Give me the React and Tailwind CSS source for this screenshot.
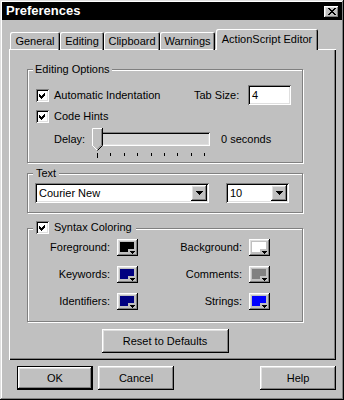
import React from 'react';

const bevel = 'shadow-[inset_-1px_-1px_#000,inset_1px_1px_#fff,inset_-2px_-2px_#808080,inset_2px_2px_#dfdfdf]';
const sunken = 'shadow-[inset_1px_1px_#808080,inset_-1px_-1px_#fff,inset_2px_2px_#000,inset_-2px_-2px_#dfdfdf]';
const etched = 'border border-[#808080] shadow-[inset_1px_1px_#fff,1px_1px_#fff]';

function Check() {
	return (
		<span className={`relative inline-block w-[13px] h-[13px] bg-white shrink-0 ${sunken}`}>
			<svg className="absolute left-[3px] top-[3px]" width="7" height="7" viewBox="0 0 7 7" shapeRendering="crispEdges">
				<polygon points="0,2 2,4 6,0 6,3 2,7 0,5" fill="#000" />
			</svg>
		</span>
	);
}

function Arrow() {
	return (
		<svg width="7" height="4" viewBox="0 0 7 4" shapeRendering="crispEdges">
			<polygon points="0,0 7,0 3.5,4" fill="#000" />
		</svg>
	);
}

function Select({ value, width }) {
	return (
		<div className={`flex items-center h-[20px] bg-white p-[2px] ${sunken} ${width}`}>
			<span className="flex-1 pl-[2px] leading-[16px]">{value}</span>
			<span className={`flex items-center justify-center w-[16px] h-[16px] bg-[#c0c0c0] ${bevel}`}>
				<Arrow />
			</span>
		</div>
	);
}

function Swatch({ color }) {
	return (
		<span className={`relative block w-[21px] h-[17px] bg-[#c0c0c0] ${bevel}`}>
			<span className={`absolute left-[3px] top-[3px] w-[14px] h-[10px] ${color}`} />
			<span className="absolute right-[2px] bottom-[2px] w-[8px] h-[5px] bg-[#c0c0c0] flex items-end justify-end pr-[1px]">
				<svg width="5" height="3" viewBox="0 0 5 3" shapeRendering="crispEdges">
					<polygon points="0,0 5,0 2.5,3" fill="#000" />
				</svg>
			</span>
		</span>
	);
}

function Slider() {
	return (
		<div className="relative w-[118px] h-[30px]">
			<div className={`absolute left-0 top-[4px] w-[118px] h-[14px] bg-[#d4d4d4] ${sunken}`} />
			<svg className="absolute left-0 top-0" width="11" height="24" viewBox="0 0 11 24">
				<polygon points="0.5,0.5 10.5,0.5 10.5,17.5 5.5,22.5 0.5,17.5" fill="#c0c0c0" />
				<path d="M0.5 18 V0.5 H10" stroke="#fff" fill="none" />
				<path d="M0.5 17.5 L5 22" stroke="#fff" fill="none" />
				<path d="M10.5 0 V17.5 L5.5 22.5" stroke="#000" fill="none" />
				<path d="M9.5 1 V17 L5.5 21" stroke="#808080" fill="none" />
			</svg>
			<div className="absolute left-[5px] top-[25px] w-[108px] flex justify-between items-start">
				<span className="w-px h-[5px] bg-black" />
				<span className="w-px h-[3px] bg-black" />
				<span className="w-px h-[3px] bg-black" />
				<span className="w-px h-[3px] bg-black" />
				<span className="w-px h-[3px] bg-black" />
				<span className="w-px h-[3px] bg-black" />
				<span className="w-px h-[3px] bg-black" />
				<span className="w-px h-[3px] bg-black" />
				<span className="w-px h-[3px] bg-black" />
			</div>
		</div>
	);
}

function Button({ children, width, isDefault }) {
	return (
		<button
			className={`h-[24px] ${width} bg-[#c0c0c0] leading-[13px] ${
				isDefault
					? 'border border-black shadow-[inset_-1px_-1px_#000,inset_1px_1px_#fff,inset_-2px_-2px_#808080,inset_2px_2px_#dfdfdf]'
					: bevel
			}`}
		>
			{children}
		</button>
	);
}

const colors = [
	['Foreground:', 'bg-black', 'Background:', 'bg-white'],
	['Keywords:', 'bg-[#000080]', 'Comments:', 'bg-[#808080]'],
	['Identifiers:', 'bg-[#000080]', 'Strings:', 'bg-[#0000ff]'],
];

const tabs = [
	['General', 'w-[50px]'],
	['Editing', 'w-[44px]'],
	['Clipboard', 'w-[56px]'],
	['Warnings', 'w-[55px]'],
];

export default function App() {
	return (
		<div className="w-[344px] h-[400px] bg-[#c0c0c0] p-[2px] flex flex-col font-['Liberation_Sans',Arial,sans-serif] text-[11px] leading-[13px] text-black shadow-[inset_-1px_-1px_#000,inset_1px_1px_#dfdfdf,inset_-2px_-2px_#808080,inset_2px_2px_#fff]">
			{/* title bar */}
			<div className="h-[18px] bg-black flex items-center justify-between pl-[4px] pr-[3px]">
				<span className="text-[13px] font-bold text-white leading-[16px]">Preferences</span>
				<span className={`flex items-center justify-center w-[15px] h-[12px] mt-[1px] bg-[#c0c0c0] ${bevel}`}>
					<svg width="8" height="7" viewBox="0 0 8 7" shapeRendering="crispEdges">
						<path d="M0 0h2v1h-2zM6 0h2v1h-2zM1 1h2v1h-2zM5 1h2v1h-2zM2 2h4v1h-4zM3 3h2v1h-2zM2 4h4v1h-4zM1 5h2v1h-2zM5 5h2v1h-2zM0 6h2v1h-2zM6 6h2v1h-2z" fill="#000" />
					</svg>
				</span>
			</div>

			{/* tabs */}
			<div className="mt-[9px] ml-[8px] flex items-end h-[21px] relative z-10">
				{tabs.map(([label, w]) => (
					<div
						key={label}
						className={`${w} h-[18px] pt-[3px] text-center rounded-t-[2px] shadow-[inset_1px_1px_#fff,inset_-1px_0_#000,inset_-2px_0_#808080]`}
					>
						{label}
					</div>
				))}
				<div className="w-[102px] h-[21px] ml-[1px] pt-[4px] text-center bg-[#c0c0c0] rounded-t-[2px] shadow-[inset_1px_1px_#fff,inset_-1px_0_#000,inset_-2px_0_#808080]">
					ActionScript Editor
				</div>
			</div>

			{/* panel */}
			<div className="mt-[-1px] ml-[7px] w-[327px] h-[311px] pl-[17px] pt-[19px] border-t border-l border-white shadow-[inset_-1px_-1px_#000,inset_-2px_-2px_#808080] flex flex-col">
				{/* Editing Options */}
				<div className={`relative w-[276px] h-[94px] pl-[8px] pt-[15px] ${etched}`}>
					<span className="absolute left-[5px] top-[-7px] px-[2px] bg-[#c0c0c0]">Editing Options</span>
					<div className="flex items-center h-[20px]">
						<Check />
						<span className="ml-[5px] w-[140px]">Automatic Indentation</span>
						<span className="w-[54px]">Tab Size:</span>
						<div className={`w-[43px] h-[20px] bg-white pl-[4px] leading-[20px] ${sunken}`}>4</div>
					</div>
					<div className="flex items-center h-[20px] mt-px">
						<Check />
						<span className="ml-[5px]">Code Hints</span>
					</div>
					<div className="flex items-start mt-[2px] pl-[18px]">
						<span className="w-[38px] mt-[5px]">Delay:</span>
						<Slider />
						<span className="ml-[11px] mt-[5px]">0 seconds</span>
					</div>
				</div>

				{/* Text */}
				<div className={`relative w-[276px] h-[40px] mt-[10px] pl-[7px] pt-[9px] flex ${etched}`}>
					<span className="absolute left-[5px] top-[-7px] px-[3px] bg-[#c0c0c0]">Text</span>
					<Select value="Courier New" width="w-[174px]" />
					<div className="ml-[17px]">
						<Select value="10" width="w-[63px]" />
					</div>
				</div>

				{/* Syntax Coloring */}
				<div className={`relative w-[276px] h-[94px] mt-[15px] pt-[10px] ${etched}`}>
					<span className="absolute left-[5px] top-[-8px] px-[3px] bg-[#c0c0c0] flex items-center">
						<Check />
						<span className="ml-[5px] pr-[1px]">Syntax Coloring</span>
					</span>
					<div className="grid grid-cols-[82px_21px_97px_21px] gap-x-[7px] gap-y-[10px] items-center">
						{colors.map(([l1, c1, l2, c2]) => (
							<React.Fragment key={l1}>
								<span className="text-right">{l1}</span>
								<Swatch color={c1} />
								<span className="text-right">{l2}</span>
								<Swatch color={c2} />
							</React.Fragment>
						))}
					</div>
				</div>

				<div className="w-[276px] mt-[7px] flex justify-center">
					<Button width="w-[127px]">Reset to Defaults</Button>
				</div>
			</div>

			{/* bottom buttons */}
			<div className="mt-[6px] pl-[15px] flex">
				<Button width="w-[76px]" isDefault>
					OK
				</Button>
				<div className="ml-[5px]">
					<Button width="w-[76px]">Cancel</Button>
				</div>
				<div className="ml-[86px]">
					<Button width="w-[76px]">Help</Button>
				</div>
			</div>
		</div>
	);
}
